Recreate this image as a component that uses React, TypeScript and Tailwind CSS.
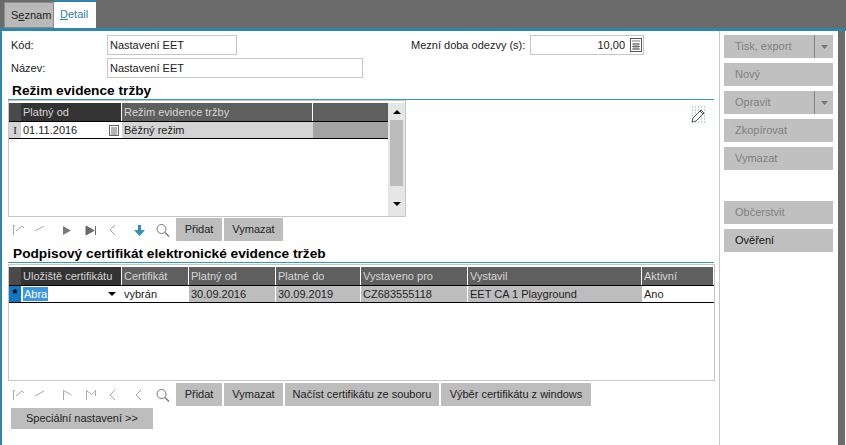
import React from 'react';

const headerFirst = [
  { label: 'Platný od', width: 'w-[101px]', active: true },
  { label: 'Režim evidence tržby', width: 'w-[191px]', active: false },
];

const headerSecond = [
  { label: 'Uložiště certifikátu', width: 'w-[101px]', active: true },
  { label: 'Certifikát', width: 'w-[67px]', active: false },
  { label: 'Platný od', width: 'w-[87px]', active: false },
  { label: 'Platné do', width: 'w-[85px]', active: false },
  { label: 'Vystaveno pro', width: 'w-[107px]', active: false },
  { label: 'Vystavil', width: 'w-[174px]', active: false },
  { label: 'Aktivní', width: 'flex-1', active: false },
];

const HeaderRow: React.FC<{ cols: typeof headerFirst }> = ({ cols }) => (
  <div className="flex h-[18px] items-stretch bg-[#5f5f5f] text-[#d6d6d6]">
    <div className="w-[12px] shrink-0 bg-[#4a4a4a]" />
    {cols.map((c) => (
      <div
        key={c.label}
        className={`${c.width} shrink-0 border-r border-white pl-[2px] leading-[18px] whitespace-nowrap ${c.active ? 'bg-[#333333]' : ''}`}
      >
        {c.label}
      </div>
    ))}
  </div>
);

const TextButton: React.FC<{ label: string; width: string }> = ({ label, width }) => (
  <div className={`${width} h-[23px] shrink-0 bg-[#bdbdbd] text-center leading-[23px] whitespace-nowrap text-[#222]`}>{label}</div>
);

const Nav: React.FC<{ active?: boolean }> = ({ active }) => {
  const off = '#a8a8a8';
  return (
    <div className="flex h-[23px] w-[165px] shrink-0 items-center">
      <svg width="165" height="16" viewBox="0 0 165 16" fill="none" strokeWidth="1">
        <path d="M4.5 13V3.5H6M7 9l6-5 2 2" stroke={off} />
        <path d="M26 9l9-5" stroke={off} />
        {active ? (
          <>
            <path d="M54 4l8 4.5-8 4.5z" fill="#7a7a7a" />
            <path d="M77 4l8 4.5-8 4.5zM86.5 4v9" fill="#6a6a6a" stroke="#6a6a6a" />
          </>
        ) : (
          <>
            <path d="M54.5 13V3.5l8 4.5" stroke={off} />
            <path d="M77.5 13V3.5l5 4 3-3M86.5 3v6" stroke={off} />
          </>
        )}
        <path d="M106 3l-5 5 5 5" stroke={off} />
        {active ? (
          <path d="M129 3h3v5h4l-5.5 6L125 8h4z" fill="#2f8fc0" />
        ) : (
          <path d="M132 3l-5 5 5 5" stroke={off} />
        )}
        <circle cx="152.5" cy="7" r="4.5" stroke="#777" />
        <path d="M156 10.5l4 4" stroke="#777" strokeWidth="1.5" />
      </svg>
    </div>
  );
};

const SideButton: React.FC<{ label: string; split?: boolean; enabled?: boolean }> = ({ label, split, enabled }) => (
  <div className={`flex h-[23px] items-stretch bg-[#c0c0c0] ${enabled ? 'text-[#111]' : 'text-[#7f7f7f]'}`}>
    <div className="flex-1 pl-[11px] leading-[23px]">{label}</div>
    {split && (
      <div className="flex w-[19px] items-center justify-center border-l border-[#808080]">
        <svg width="7" height="4" viewBox="0 0 7 4"><path d="M0 0h7L3.5 4z" fill="#777" /></svg>
      </div>
    )}
  </div>
);

export default function App() {
  return (
    <div className="flex h-[445px] w-[846px] flex-col overflow-hidden bg-[#6b6b6b] font-['Liberation_Sans',Arial,sans-serif] text-[11px] text-[#222]">
      {/* tabs */}
      <div className="flex h-[28px] shrink-0 items-end pl-[4px]">
        <div className="h-[26px] w-[50px] border border-[#8a8a8a] bg-[#b9b9b9] pl-[6px] leading-[25px]">
          S<span className="underline">e</span>znam
        </div>
        <div className="h-[28px] w-[42px] border-t-2 border-[#2f86ad] bg-white pl-[6px] leading-[24px] text-[#2d7ea6]">
          <span className="underline">D</span>etail
        </div>
      </div>

      <div className="flex h-[417px] w-[846px] border-t-[3px] border-[#2f86ad]">
        <div className="flex w-[838px] shrink-0 border-l-2 border-[#2f86ad] bg-white">
          {/* left part */}
          <div className="flex w-[718px] shrink-0 flex-col border-r border-[#c8c8c8] pl-[6px] pt-[4px]">
            <div className="flex h-[20px] items-center">
              <div className="w-[99px] pl-[3px]">Kód:</div>
              <div className="h-[20px] w-[130px] border border-[#c6c6c6] pl-[2px] leading-[18px]">Nastavení EET</div>
              <div className="ml-[174px] w-[119px] whitespace-nowrap">Mezní doba odezvy (s):</div>
              <div className="flex h-[20px] w-[114px] items-center justify-end border border-[#c6c6c6] pr-[1px]">
                <span>10,00</span>
                <svg className="ml-[5px]" width="12" height="14" viewBox="0 0 12 14" fill="none" stroke="#555">
                  <rect x="0.5" y="0.5" width="11" height="13" />
                  <path d="M2 3h8M2 6h8M2 8.5h8M2 11h8M4 5v7M6 5v7M8 5v7" strokeWidth="0.8" />
                </svg>
              </div>
            </div>
            <div className="mt-[3px] flex h-[20px] items-center">
              <div className="w-[99px] pl-[3px]">Název:</div>
              <div className="h-[20px] w-[256px] border border-[#c6c6c6] pl-[2px] leading-[18px]">Nastavení EET</div>
            </div>

            <div className="mt-[5px] h-[16px] pl-[4px] text-[13.7px] leading-[16px] font-bold text-black">Režim evidence tržby</div>
            <div className="h-px w-[706px] bg-[#2f9cc4]" />

            <div className="flex items-start">
              {/* first grid */}
              <div className="flex h-[117px] w-[398px] shrink-0 border border-[#c6c6c6] pt-[2px]">
                <div className="w-[379px] shrink-0">
                  <HeaderRow cols={headerFirst} />
                  <div className="flex h-[18px] items-stretch border-y border-black bg-[#d4d4d4] leading-[16px]">
                    <div className="w-[12px] shrink-0 text-center font-['Liberation_Serif',serif]">I</div>
                    <div className="flex w-[101px] shrink-0 items-center justify-between bg-white pl-[2px] pr-[3px]">
                      <span>01.11.2016</span>
                      <svg width="10" height="11" viewBox="0 0 10 11" fill="none" stroke="#666">
                        <rect x="0.5" y="0.5" width="9" height="10" />
                        <path d="M2 3h6M2 5h6M2 7h6M2 9h6" />
                      </svg>
                    </div>
                    <div className="w-[191px] shrink-0 pl-[2px]">Běžný režim</div>
                    <div className="flex-1 bg-[#a3a3a3]" />
                  </div>
                </div>
                <div className="flex flex-1 flex-col items-center bg-[#e6e6e6]">
                  <svg className="mt-[7px]" width="8" height="4" viewBox="0 0 8 4"><path d="M4 0l4 4H0z" fill="#000" /></svg>
                  <div className="mt-[6px] h-[66px] w-[13px] bg-[#bcbcbc]" />
                  <svg className="mt-[16px]" width="8" height="4" viewBox="0 0 8 4"><path d="M0 0h8L4 4z" fill="#000" /></svg>
                </div>
              </div>
              {/* pencil */}
              <svg className="ml-[284px] mt-[6px]" width="18" height="18" viewBox="0 0 18 18" fill="none">
                <path d="M2 1h15M2 4h15M2 7h15M2 10h15M2 13h15M2 16h15" stroke="#6aa5bd" strokeDasharray="1 2" />
                <path d="M2 16l1-4 8-8 3 3-8 8z" fill="#fff" stroke="#555" />
                <path d="M10 5l3 3" stroke="#555" />
              </svg>
            </div>

            <div className="mt-[1px] flex h-[23px] items-center gap-[2px] pl-[1px]">
              <Nav active />
              <TextButton label="Přidat" width="w-[46px]" />
              <TextButton label="Vymazat" width="w-[59px]" />
            </div>

            <div className="mt-[5px] h-[15px] pl-[5px] text-[13.7px] leading-[15px] font-bold text-black">Podpisový certifikát elektronické evidence tržeb</div>
            <div className="mt-[1px] h-px w-[706px] bg-[#2f9cc4]" />

            {/* second grid */}
            <div className="mt-[1px] h-[117px] w-[707px] border border-[#c6c6c6] pt-[2px]">
              <HeaderRow cols={headerSecond} />
              <div className="flex h-[18px] items-stretch border-y border-black leading-[16px]">
                <div className="flex w-[12px] shrink-0 items-center justify-center bg-[#0f78c2] text-[13px] font-bold text-black">*</div>
                <div className="flex w-[101px] shrink-0 items-center justify-between border-r border-white pl-[2px] pr-[5px]">
                  <span className="bg-[#3a97e0] px-px leading-[14px] text-white">Abra</span>
                  <svg width="8" height="4" viewBox="0 0 8 4"><path d="M0 0h8L4 4z" fill="#000" /></svg>
                </div>
                <div className="w-[67px] shrink-0 pl-[2px]">vybrán</div>
                <div className="w-[87px] shrink-0 border-r border-white bg-[#bdbdbd] pl-[2px]">30.09.2016</div>
                <div className="w-[85px] shrink-0 border-r border-white bg-[#bdbdbd] pl-[2px]">30.09.2019</div>
                <div className="w-[107px] shrink-0 border-r border-white bg-[#bdbdbd] pl-[2px]">CZ683555118</div>
                <div className="w-[174px] shrink-0 bg-[#bdbdbd] pl-[2px]">EET CA 1 Playground</div>
                <div className="flex-1 pl-[2px]">Ano</div>
              </div>
            </div>

            <div className="mt-[2px] flex h-[23px] items-center gap-[2px] pl-[1px]">
              <Nav />
              <TextButton label="Přidat" width="w-[46px]" />
              <TextButton label="Vymazat" width="w-[59px]" />
              <TextButton label="Načíst certifikátu ze souboru" width="w-[154px]" />
              <TextButton label="Výběr certifikátu z windows" width="w-[150px]" />
            </div>

            <div className="mt-[2px] ml-[3px] h-[21px] w-[142px] bg-[#bdbdbd] text-center leading-[21px]">Speciální nastavení &gt;&gt;</div>
          </div>

          {/* side buttons */}
          <div className="flex flex-1 flex-col gap-[5px] pl-[4px] pr-[5px] pt-[4px]">
            <SideButton label="Tisk, export" split />
            <SideButton label="Nový" />
            <SideButton label="Opravit" split />
            <SideButton label="Zkopírovat" />
            <SideButton label="Vymazat" />
            <div className="h-[21px]" />
            <SideButton label="Občerstvit" />
            <SideButton label="Ověření" enabled />
          </div>
        </div>
        <div className="w-[7px] shrink-0" />
        <div className="w-px shrink-0 bg-white" />
      </div>
    </div>
  );
}
